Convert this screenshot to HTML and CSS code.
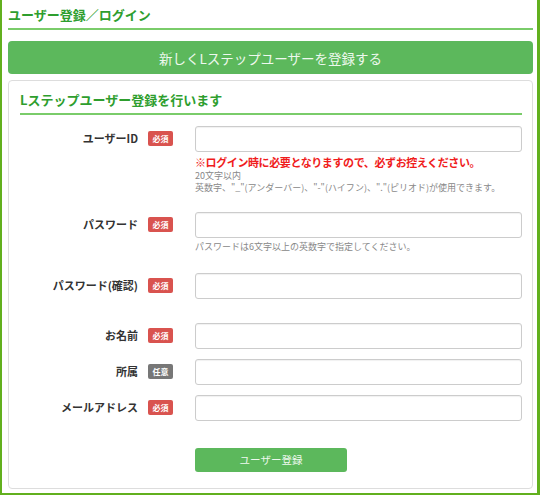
FILE: index.html
```html
<!DOCTYPE html>
<html lang="ja">
<head>
<meta charset="utf-8">
<title>ユーザー登録／ログイン</title>
<link rel="stylesheet" href="styles.css">
</head>
<body>
<div class="frame">
  <h1 class="page-title">ユーザー登録／ログイン</h1>
  <a class="btn-new">新しくLステップユーザーを登録する</a>
  <div class="panel">
    <h2 class="panel-title">Lステップユーザー登録を行います</h2>
    <form class="form">
      <div class="row row-id">
        <label class="label">ユーザーID</label>
        <span class="badge req">必須</span>
        <div class="field">
          <input class="input" type="text">
          <p class="note-red">※ログイン時に必要となりますので、必ずお控えください。</p>
          <p class="note">20文字以内</p>
          <p class="note">英数字、"_"(アンダーバー)、"-"(ハイフン)、"."(ピリオド)が使用できます。</p>
        </div>
      </div>
      <div class="row row-pw">
        <label class="label">パスワード</label>
        <span class="badge req">必須</span>
        <div class="field">
          <input class="input" type="password">
          <p class="note">パスワードは6文字以上の英数字で指定してください。</p>
        </div>
      </div>
      <div class="row row-pw2">
        <label class="label">パスワード(確認)</label>
        <span class="badge req">必須</span>
        <div class="field">
          <input class="input" type="password">
        </div>
      </div>
      <div class="row">
        <label class="label">お名前</label>
        <span class="badge req">必須</span>
        <div class="field">
          <input class="input" type="text">
        </div>
      </div>
      <div class="row">
        <label class="label">所属</label>
        <span class="badge opt">任意</span>
        <div class="field">
          <input class="input" type="text">
        </div>
      </div>
      <div class="row row-last">
        <label class="label">メールアドレス</label>
        <span class="badge req">必須</span>
        <div class="field">
          <input class="input" type="text">
        </div>
      </div>
      <div class="submit-row">
        <button type="button" class="btn-submit">ユーザー登録</button>
      </div>
    </form>
  </div>
</div>
</body>
</html>
```
FILE: styles.css
```css
html, body {
  margin: 0;
  padding: 0;
  background: #fff;
}
body {
  font-family: "Noto Sans CJK JP", "Noto Sans", sans-serif;
  color: #333;
}
.frame {
  width: 525px;
  height: 493px;
  padding: 0 4px 0 6px;
  border-left: 2px solid #62b01e;
  border-right: 3px solid #62b01e;
  border-bottom: 2px solid #62b01e;
}
.page-title {
  margin: 0;
  padding-top: 6px;
  height: 22px;
  font-size: 13px;
  line-height: 18px;
  font-weight: bold;
  color: #2e9e2e;
  border-bottom: 2px solid #7acc6a;
}
.btn-new {
  display: flex;
  align-items: center;
  justify-content: center;
  margin-top: 11px;
  height: 33px;
  border-radius: 4px;
  background: #5cb85c;
  color: #eef8ee;
  font-size: 13.5px;
}
.panel {
  margin-top: 6px;
  height: 407px;
  border: 1px solid #ddd;
  border-radius: 4px;
  padding: 0 10px 0 11px;
}
.panel-title {
  margin: 0;
  padding-top: 10px;
  height: 22px;
  font-size: 13px;
  line-height: 18px;
  font-weight: bold;
  color: #2e9e2e;
  border-bottom: 2px solid #7acc6a;
}
.form {
  padding-top: 11px;
}
.row {
  display: flex;
  align-items: flex-start;
  margin-bottom: 10px;
}
.row-id { margin-bottom: 18px; }
.row-pw { margin-bottom: 20px; }
.row-pw2 { margin-bottom: 24px; }
.row-last { margin-bottom: 24px; }
.label {
  width: 118px;
  height: 26px;
  display: flex;
  align-items: center;
  justify-content: flex-end;
  font-size: 11px;
  font-weight: bold;
  color: #333;
  padding-bottom: 2px;
  box-sizing: border-box;
}
.badge {
  margin: 5px 22px 0 10px;
  width: 25px;
  height: 15px;
  border-radius: 2px;
  display: flex;
  align-items: center;
  justify-content: center;
  font-size: 8px;
  font-weight: bold;
  color: #fff;
  line-height: 1;
}
.req { background: #d9534f; }
.opt { background: #777; }
.field {
  flex: 1;
}
.input {
  display: block;
  box-sizing: border-box;
  width: 100%;
  height: 26px;
  margin: 0;
  border: 1px solid #ccc;
  border-radius: 3px;
  box-shadow: inset 0 1px 1px rgba(0,0,0,0.06);
  background: #fff;
}
.note-red {
  margin: 2px 0 0;
  font-size: 11px;
  line-height: 16px;
  font-weight: bold;
  color: #f01c1c;
  letter-spacing: -0.4px;
}
.note {
  margin: 0;
  font-size: 9px;
  line-height: 12px;
  color: #888;
}
.row-pw .note {
  margin-top: 3px;
}
.submit-row {
  padding-left: 175px;
}
.btn-submit {
  width: 152px;
  height: 24px;
  border: none;
  border-radius: 3px;
  background: #5cb85c;
  color: #eef8ee;
  font-family: "Noto Sans CJK JP", "Noto Sans", sans-serif;
  font-size: 10.5px;
  padding: 0;
}
```
